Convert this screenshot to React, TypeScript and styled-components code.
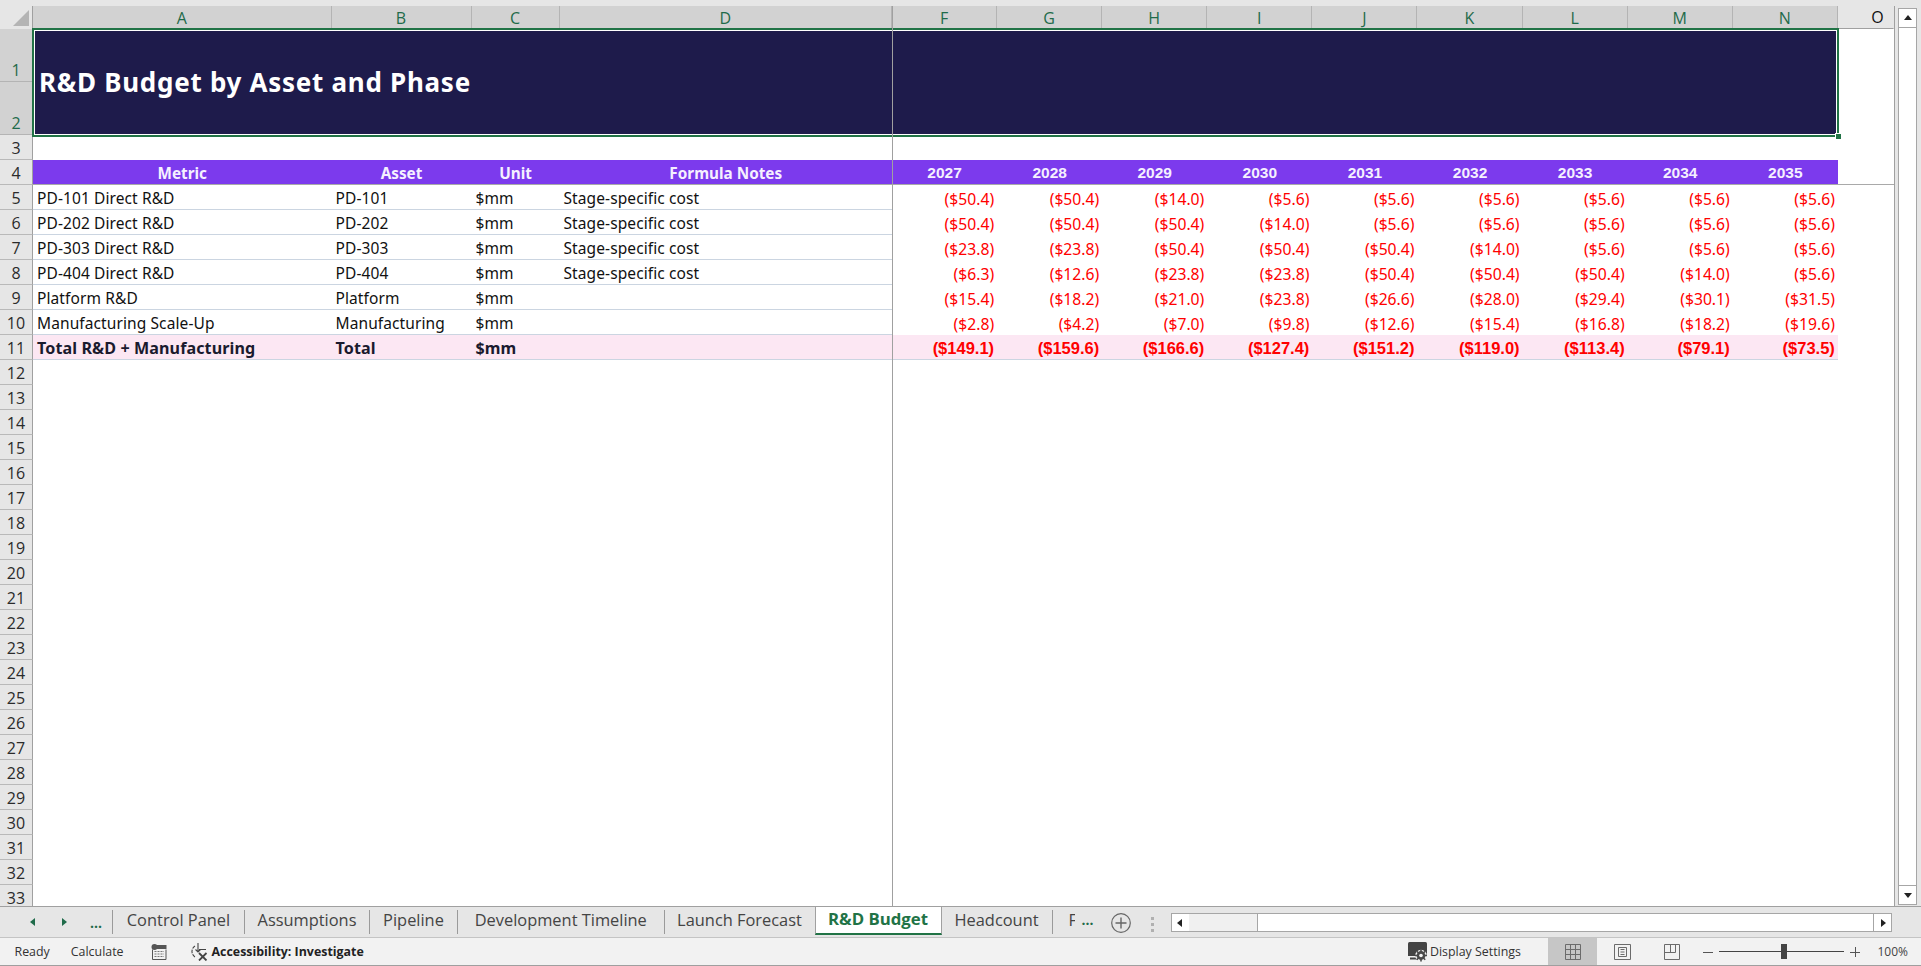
import React from "react";
import styled, { createGlobalStyle } from "styled-components";

const Global = createGlobalStyle`
  html, body { margin: 0; padding: 0; background: #e6e6e6; overflow: hidden; }
  * { box-sizing: border-box; }
`;

const CELL_FONT = `"Noto Sans", "Liberation Sans", sans-serif`;
const UI_FONT = `"Open Sans", "Noto Sans", sans-serif`;
const ARIAL = `"Liberation Sans", Arial, sans-serif`;

const Frame = styled.div`
  width: 1921px;
  height: 966px;
  display: flex;
  flex-direction: column;
  background: #e6e6e6;
  overflow: hidden;
  padding-top: 6px;
`;

const Workspace = styled.div`
  height: 900px;
  display: flex;
`;

const SheetWrap = styled.div`
  position: relative;
  width: 1895px;
  height: 900px;
  border-right: 1px solid #a0a0a0;
  background: #fff;
`;

const SheetGrid = styled.div`
  display: grid;
  grid-template-columns: 33px 298.5px 140px 88px 332.5px repeat(9, 105.1px) 1fr;
  grid-template-rows: 23px 53px 53px 25px 25px repeat(28, 25px) 21px;
`;

const Corner = styled.div`
  background: #e6e6e6;
  border-right: 1px solid #a0a0a0;
  display: flex;
  align-items: center;
  justify-content: flex-end;
  padding-right: 3px;
`;

const ColHead = styled.div<{ $active?: boolean }>`
  background: ${(p) => (p.$active ? "#d2d2d2" : "#e6e6e6")};
  color: ${(p) => (p.$active ? "#1f6b4a" : "#111")};
  border-right: 1px solid ${(p) => (p.$active ? "#b4b4b4" : "transparent")};
  border-bottom: ${(p) => (p.$active ? "0" : "1px solid #a0a0a0")};
  padding-left: ${(p) => (p.$active ? "0" : "24px")};
  font: 400 16px ${UI_FONT};
  display: flex;
  align-items: center;
  justify-content: center;
`;

const RowHead = styled.div<{ $active?: boolean; $tall?: boolean; $cut?: boolean }>`
  grid-column: 1;
  background: ${(p) => (p.$active ? "#d2d2d2" : "#e6e6e6")};
  color: ${(p) => (p.$active ? "#1f6b4a" : "#2b2b2b")};
  border-right: 1px solid #a0a0a0;
  border-bottom: ${(p) => (p.$cut ? "0" : `1px solid ${p.$active ? "#b4b4b4" : "#b9b9b9"}`)};
  font: 400 16px / 14px ${UI_FONT};
  display: flex;
  align-items: ${(p) => (p.$tall ? "flex-end" : "center")};
  justify-content: center;
  padding-top: ${(p) => (p.$tall ? "0" : p.$cut ? "5px" : "2px")};
  padding-bottom: ${(p) => (p.$tall ? "4px" : "0")};
`;

const TitleCell = styled.div`
  grid-column: 2 / 15;
  grid-row: 2 / 4;
  margin: -1px -1px -2px -1px;
  position: relative;
  z-index: 2;
  background: #1e1b4b;
  box-shadow: inset 0 0 0 2px #217346, inset 0 0 0 3px #fff;
  color: #fff;
  font: 700 26px ${CELL_FONT};
  letter-spacing: 0.72px;
  display: flex;
  align-items: center;
  padding: 0 0 2px 7px;
`;

const FillHandle = styled.span`
  position: absolute;
  right: -2px;
  bottom: -2px;
  width: 6px;
  height: 6px;
  background: #217346;
  border: 1px solid #fff;
  border-right: 0;
  border-bottom: 0;
`;

const BlankRow = styled.div`
  grid-column: 2 / 16;
`;

const HeadCell = styled.div<{ $years?: boolean }>`
  background: #7c3aed;
  color: #f5f0ff;
  font: 700 ${(p) => (p.$years ? "15.5px" : "15.3px")} ${(p) => (p.$years ? ARIAL : CELL_FONT)};
  display: flex;
  align-items: center;
  justify-content: center;
  padding-top: 1px;
  border-bottom: 1px solid #a9a9a9;
`;

const HeadEnd = styled.div`
  border-bottom: 1px solid #a9a9a9;
`;

const TextCell = styled.div<{ $total?: boolean }>`
  background: ${(p) => (p.$total ? "#fce7f3" : "#fff")};
  color: ${(p) => (p.$total ? "#1a1a2e" : "#111")};
  font: ${(p) => (p.$total ? "700 16.1px" : "400 15.5px")} ${CELL_FONT};
  letter-spacing: 0.1px;
  display: flex;
  align-items: center;
  padding: 1px 0 0 4px;
  white-space: nowrap;
  border-bottom: 1px solid #cbd5e1;
`;

const NumCell = styled.div<{ $total?: boolean }>`
  background: ${(p) => (p.$total ? "#fce7f3" : "#fff")};
  color: #ff0000;
  font: ${(p) => (p.$total ? `700 16.5px ${ARIAL}` : `400 15.7px ${CELL_FONT}`)};
  display: flex;
  align-items: center;
  justify-content: flex-end;
  padding: 2px 3px 0 0;
  white-space: nowrap;
  border-bottom: ${(p) => (p.$total ? "1px solid #cbd5e1" : "0")};
`;

const FreezeV = styled.div`
  position: absolute;
  left: 892px;
  top: 0;
  bottom: 0;
  width: 1px;
  background: #a0a0a0;
  z-index: 3;
`;

const ScrollV = styled.div`
  width: 26px;
  padding: 2px 4px 1px 3px;
  display: flex;
  flex-direction: column;
`;

const ScrollVTrack = styled.div`
  flex: 1;
  display: flex;
  flex-direction: column;
  justify-content: space-between;
  background: #fff;
  border: 1px solid #a6a6a6;
`;

const ScrollBtn = styled.div<{ $end?: boolean }>`
  height: 19px;
  display: flex;
  align-items: center;
  justify-content: center;
  background: #fff;
  border-top: ${(p) => (p.$end ? "1px solid #a6a6a6" : "0")};
  border-bottom: ${(p) => (p.$end ? "0" : "1px solid #a6a6a6")};
`;

const TabBar = styled.div`
  height: 32px;
  display: flex;
  align-items: flex-start;
  border-top: 1px solid #a0a0a0;
  border-bottom: 1px solid #c4c4c4;
  background: #e6e6e6;
`;

const Nav = styled.div`
  width: 113px;
  height: 24px;
  margin-top: 3px;
  display: flex;
  align-items: center;
  border-right: 1px solid #9a9a9a;
  color: #1f6b4a;
  font: 700 15px ${UI_FONT};
  padding-left: 28px;
  gap: 21px;
`;

const Tab = styled.div<{ $w: number }>`
  width: ${(p) => p.$w}px;
  height: 24px;
  margin-top: 3px;
  padding-bottom: 5px;
  display: flex;
  align-items: center;
  justify-content: center;
  border-right: 1px solid #9a9a9a;
  color: #444;
  font: 400 16.4px / 19px ${UI_FONT};
  white-space: nowrap;
`;

const ActiveTab = styled.div`
  width: 127px;
  height: 29px;
  margin-top: -1px;
  margin-left: -1px;
  padding-bottom: 3px;
  display: flex;
  align-items: center;
  justify-content: center;
  background: #fff;
  border: 1px solid #a0a0a0;
  border-bottom: 2px solid #217346;
  color: #217346;
  font: 700 16.8px / 19px ${UI_FONT};
`;

const Overflow = styled.div`
  width: 43px;
  height: 24px;
  margin-top: 3px;
  padding: 0 0 5px 16px;
  display: flex;
  align-items: center;
  color: #444;
  font: 400 16.4px / 19px ${UI_FONT};
  gap: 7px;
`;

const ClippedName = styled.span`
  width: 6px;
  height: 24px;
  line-height: 24px;
  overflow: hidden;
`;

const Dots = styled.span`
  color: #1f6b4a;
  font-weight: 700;
  font-size: 14px;
`;

const AddBtn = styled.div`
  width: 22px;
  margin-top: 5px;
  margin-left: 14px;
  display: flex;
`;

const Grip = styled.div`
  margin: 10px 0 0 19.5px;
  width: 3px;
  display: flex;
  flex-direction: column;
  gap: 3px;
  span {
    width: 3px;
    height: 3px;
    background: #b0b0b0;
  }
`;

const HScroll = styled.div`
  margin: 6px 0 0 16.5px;
  width: 721.5px;
  height: 19px;
  display: flex;
  background: #efefef;
  border: 1px solid #a6a6a6;
`;

const HBtn = styled.div`
  width: 17px;
  background: #fff;
  display: flex;
  align-items: center;
  justify-content: center;
`;

const HTrack = styled.div`
  width: 68px;
  background: #f0f0f0;
`;

const HThumb = styled.div`
  flex: 1;
  background: #fff;
  border-left: 1px solid #a6a6a6;
  border-right: 1px solid #a6a6a6;
`;

const Status = styled.div`
  height: 27px;
  display: flex;
  align-items: center;
  background: #f2f2f2;
  color: #333;
  font: 400 12.4px ${UI_FONT};
`;

const BottomEdge = styled.div`
  height: 1px;
  background: #9f9f9f;
`;

const StatusText = styled.span<{ $ml: number; $bold?: boolean }>`
  margin-left: ${(p) => p.$ml}px;
  font-weight: ${(p) => (p.$bold ? 700 : 400)};
  color: ${(p) => (p.$bold ? "#222" : "#333")};
  white-space: nowrap;
`;

const IconSlot = styled.span<{ $ml: number }>`
  margin-left: ${(p) => p.$ml}px;
  display: inline-flex;
`;

const Spacer = styled.div`
  flex: 1;
`;

const ViewBtn = styled.div<{ $on?: boolean; $ml?: number }>`
  width: 49.5px;
  height: 27px;
  margin-left: ${(p) => p.$ml ?? 0}px;
  display: flex;
  align-items: center;
  justify-content: center;
  background: ${(p) => (p.$on ? "#c6c6c6" : "transparent")};
`;

const Zoom = styled.div`
  display: flex;
  align-items: center;
  margin-left: 7px;
  margin-right: 13px;
  color: #555;
`;

const ZoomTrack = styled.div`
  position: relative;
  width: 125px;
  height: 1px;
  background: #444;
  margin: 0 6px;
`;

const ZoomThumb = styled.span`
  position: absolute;
  left: 62px;
  top: -7px;
  width: 6px;
  height: 15px;
  background: #444;
`;

const ZoomPct = styled.span`
  margin-left: 17px;
  font-size: 12px;
  color: #444;
`;

const Tri = ({ d }: { d: string }) => (
  <svg width="10" height="10" viewBox="0 0 10 10">
    <path d={d} fill="#222" />
  </svg>
);

const GREEN_L = "M7 1 L2 5 L7 9 Z";
const GREEN_R = "M3 1 L8 5 L3 9 Z";

const cols = ["A", "B", "C", "D", "F", "G", "H", "I", "J", "K", "L", "M", "N"];
const years = [2027, 2028, 2029, 2030, 2031, 2032, 2033, 2034, 2035];

const rows: { m: string; a: string; note?: string; v: string[] }[] = [
  { m: "PD-101 Direct R&D", a: "PD-101", note: "Stage-specific cost", v: ["50.4", "50.4", "14.0", "5.6", "5.6", "5.6", "5.6", "5.6", "5.6"] },
  { m: "PD-202 Direct R&D", a: "PD-202", note: "Stage-specific cost", v: ["50.4", "50.4", "50.4", "14.0", "5.6", "5.6", "5.6", "5.6", "5.6"] },
  { m: "PD-303 Direct R&D", a: "PD-303", note: "Stage-specific cost", v: ["23.8", "23.8", "50.4", "50.4", "50.4", "14.0", "5.6", "5.6", "5.6"] },
  { m: "PD-404 Direct R&D", a: "PD-404", note: "Stage-specific cost", v: ["6.3", "12.6", "23.8", "23.8", "50.4", "50.4", "50.4", "14.0", "5.6"] },
  { m: "Platform R&D", a: "Platform", v: ["15.4", "18.2", "21.0", "23.8", "26.6", "28.0", "29.4", "30.1", "31.5"] },
  { m: "Manufacturing Scale-Up", a: "Manufacturing", v: ["2.8", "4.2", "7.0", "9.8", "12.6", "15.4", "16.8", "18.2", "19.6"] },
];
const totals = ["149.1", "159.6", "166.6", "127.4", "151.2", "119.0", "113.4", "79.1", "73.5"];

const emptyRows = Array.from({ length: 22 }, (_, i) => 12 + i);

export default function App() {
  return (
    <Frame>
      <Global />
      <Workspace>
        <SheetWrap>
          <SheetGrid>
            <Corner>
              <svg width="16" height="16" viewBox="0 0 16 16">
                <path d="M16 0 L16 16 L0 16 Z" fill="#b4b4b4" />
              </svg>
            </Corner>
            {cols.map((c) => (
              <ColHead key={c} $active>
                {c}
              </ColHead>
            ))}
            <ColHead>O</ColHead>

            <RowHead $active $tall>1</RowHead>
            <TitleCell>
              R&amp;D Budget by Asset and Phase
              <FillHandle />
            </TitleCell>
            <RowHead $active $tall style={{ gridRow: "3" }}>2</RowHead>

            <RowHead>3</RowHead>
            <BlankRow />

            <RowHead>4</RowHead>
            <HeadCell>Metric</HeadCell>
            <HeadCell>Asset</HeadCell>
            <HeadCell>Unit</HeadCell>
            <HeadCell>Formula Notes</HeadCell>
            {years.map((y) => (
              <HeadCell key={y} $years>
                {y}
              </HeadCell>
            ))}
            <HeadEnd />

            {rows.map((r, i) => (
              <React.Fragment key={r.m}>
                <RowHead>{i + 5}</RowHead>
                <TextCell>{r.m}</TextCell>
                <TextCell>{r.a}</TextCell>
                <TextCell>$mm</TextCell>
                <TextCell>{r.note}</TextCell>
                {r.v.map((v, j) => (
                  <NumCell key={j}>{`($${v})`}</NumCell>
                ))}
                <div />
              </React.Fragment>
            ))}

            <RowHead>11</RowHead>
            <TextCell $total>Total R&amp;D + Manufacturing</TextCell>
            <TextCell $total>Total</TextCell>
            <TextCell $total>$mm</TextCell>
            <TextCell $total />
            {totals.map((v) => (
              <NumCell key={v} $total>{`($${v})`}</NumCell>
            ))}
            <div />

            {emptyRows.map((n) => (
              <React.Fragment key={n}>
                <RowHead $cut={n === 33}>{n}</RowHead>
                <BlankRow />
              </React.Fragment>
            ))}
          </SheetGrid>
          <FreezeV />
        </SheetWrap>
        <ScrollV>
          <ScrollVTrack>
            <ScrollBtn>
              <Tri d="M5 2 L9 7 L1 7 Z" />
            </ScrollBtn>
            <ScrollBtn $end>
              <Tri d="M1 3 L9 3 L5 8 Z" />
            </ScrollBtn>
          </ScrollVTrack>
        </ScrollV>
      </Workspace>

      <TabBar>
        <Nav>
          <svg width="10" height="12" viewBox="0 0 10 10">
            <path d={GREEN_L} fill="#1f6b4a" />
          </svg>
          <svg width="10" height="12" viewBox="0 0 10 10">
            <path d={GREEN_R} fill="#1f6b4a" />
          </svg>
          <Dots>...</Dots>
        </Nav>
        <Tab $w={132}>Control Panel</Tab>
        <Tab $w={125}>Assumptions</Tab>
        <Tab $w={88}>Pipeline</Tab>
        <Tab $w={206.5}>Development Timeline</Tab>
        <Tab $w={151}>Launch Forecast</Tab>
        <ActiveTab>R&amp;D Budget</ActiveTab>
        <Tab $w={111}>Headcount</Tab>
        <Overflow>
          <ClippedName>F</ClippedName>
          <Dots>...</Dots>
        </Overflow>
        <AddBtn>
          <svg width="22" height="22" viewBox="0 0 22 22" fill="none" stroke="#666">
            <circle cx="11" cy="11" r="9.3" strokeWidth="1.2" />
            <path d="M11 5.5 V16.5 M5.5 11 H16.5" strokeWidth="1.4" />
          </svg>
        </AddBtn>
        <Grip>
          <span />
          <span />
          <span />
        </Grip>
        <HScroll>
          <HBtn>
            <Tri d="M7 1 L2 5 L7 9 Z" />
          </HBtn>
          <HTrack />
          <HThumb />
          <HBtn>
            <Tri d="M3 1 L8 5 L3 9 Z" />
          </HBtn>
        </HScroll>
      </TabBar>

      <Status>
        <StatusText $ml={14.5}>Ready</StatusText>
        <StatusText $ml={21}>Calculate</StatusText>
        <IconSlot $ml={27}>
          <svg width="16" height="16" viewBox="0 0 16 16">
            <circle cx="3.5" cy="3" r="3" fill="#555" />
            <path d="M6 1 H15.5 V5 H6 Z" fill="#555" />
            <path d="M1.5 5.5 V15.5 H15 V5.5" fill="none" stroke="#555" />
            <path d="M3.5 7.5 H13 M3.5 10 H13 M3.5 12.5 H13" stroke="#777" strokeDasharray="2 1" />
          </svg>
        </IconSlot>
        <IconSlot $ml={23}>
          <svg width="18" height="18" viewBox="0 0 18 18" fill="none" stroke="#444">
            <path d="M5 3 A6.5 6.5 0 0 0 5 14" strokeWidth="1.1" strokeDasharray="3.5 1.2" />
            <path d="M8 0 V9 M5.5 6.5 L8 9 L10.5 6.5 M9 6.5 H16" strokeWidth="1.1" />
            <path d="M9 10 L16.5 17.5 M16.5 10 L9 17.5" strokeWidth="1.8" />
          </svg>
        </IconSlot>
        <StatusText $ml={4} $bold>Accessibility: Investigate</StatusText>
        <Spacer />
        <IconSlot $ml={0}>
          <svg width="20" height="20" viewBox="0 0 20 20">
            <path d="M0 1.5 Q0 0 1.5 0 H17.5 Q19 0 19 1.5 V14 H0 Z" fill="#444" />
            <path d="M2 15.5 H9 V17.5 H2 Z" fill="#444" />
            <circle cx="13" cy="13.5" r="5.8" fill="#f2f2f2" />
            <circle cx="13" cy="13.5" r="4.4" fill="#4a4a4a" />
            <path d="M13 7.5 V19.5 M7 13.5 H19 M8.8 9.3 L17.2 17.7 M17.2 9.3 L8.8 17.7" stroke="#4a4a4a" strokeWidth="1.6" />
            <circle cx="13" cy="13.5" r="1.8" fill="#f2f2f2" />
          </svg>
        </IconSlot>
        <StatusText $ml={1.5}>Display Settings</StatusText>
        <ViewBtn $on $ml={27}>
          <svg width="16" height="16" viewBox="0 0 16 16" fill="none" stroke="#6b6b6b">
            <path d="M.5.5 H15.5 V15.5 H.5 Z M5.5.5 V15.5 M10.5.5 V15.5 M.5 5.5 H15.5 M.5 10.5 H15.5" />
          </svg>
        </ViewBtn>
        <ViewBtn>
          <svg width="17" height="16" viewBox="0 0 17 16" fill="none" stroke="#6b6b6b">
            <path d="M.5.5 H16.5 V15.5 H.5 Z" />
            <path d="M4.5 3.5 H12.5 V12.5 H4.5 Z M6.5 5.5 H10.5 M6.5 8 H10.5 M6.5 10.5 H10.5" />
          </svg>
        </ViewBtn>
        <ViewBtn>
          <svg width="16" height="16" viewBox="0 0 16 16" fill="none" stroke="#6b6b6b">
            <path d="M.5.5 H15.5 V15.5 H.5 Z M.5 8.5 H11.5 V.5 M6.5 .5 V8.5" />
          </svg>
        </ViewBtn>
        <Zoom>
          <svg width="10" height="10" viewBox="0 0 10 10" stroke="#555">
            <path d="M0 5.5 H10" />
          </svg>
          <ZoomTrack>
            <ZoomThumb />
          </ZoomTrack>
          <svg width="10" height="10" viewBox="0 0 10 10" stroke="#555">
            <path d="M0 5.5 H10 M5.5 0 V10" />
          </svg>
          <ZoomPct>100%</ZoomPct>
        </Zoom>
      </Status>
      <BottomEdge />
    </Frame>
  );
}
